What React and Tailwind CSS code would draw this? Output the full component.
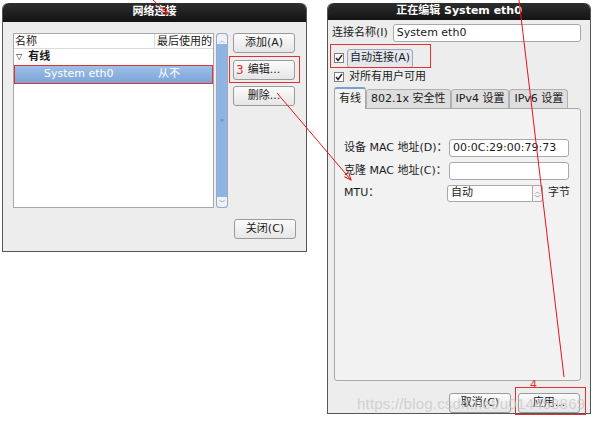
const font = { fontFamily: '"DejaVu Sans", "Noto Sans CJK SC", sans-serif' };

const Btn = ({ children, className = '' }) => (
  <div className={`h-[20px] w-[62px] flex items-center justify-center rounded-[3px] border border-[#9a9a9a] bg-gradient-to-b from-[#fbfbfb] to-[#e6e6e6] text-[11px] text-[#1a1a1a] ${className}`}>
    {children}
  </div>
);

const TitleBar = ({ children }) => (
  <div className="h-[19px] rounded-t-[6px] bg-gradient-to-b from-[#2e2e2e] to-[#141414] flex items-center justify-center text-[11px] font-bold text-white">
    {children}
  </div>
);

const Check = () => (
  <div className="w-[10px] h-[10px] border border-[#808080] bg-white flex items-center justify-center">
    <svg width="8" height="8" viewBox="0 0 8 8"><path d="M1 4 L3 6.5 L7 1" stroke="#222" strokeWidth="1.4" fill="none" /></svg>
  </div>
);

const Field = ({ value, w = 'w-[120px]' }) => (
  <div className={`h-[18px] ${w} rounded-[3px] border border-[#a8a8a8] bg-white px-[3px] text-[11px] text-[#1a1a1a] flex items-center`}>{value}</div>
);

export default function App() {
  return (
    <div className="relative w-[595px] h-[425px] bg-white overflow-hidden" style={font}>
      <div className="flex items-start pt-[3px] pl-[2px]">
        {/* left dialog */}
        <div className="w-[305px] h-[249px] flex flex-col rounded-t-[6px] border-x border-b border-[#555] bg-[#ededed]">
          <TitleBar>网络连接</TitleBar>
          <div className="flex flex-col pt-[11px] pl-[10px]">
            <div className="flex h-[175px]">
              <div className="w-[201px] border border-[#a8a8a8] bg-white flex flex-col text-[11px] text-[#1a1a1a]">
                <div className="h-[15px] flex border-b border-[#dcdcdc]">
                  <div className="w-[141px] pl-[1px] border-r border-[#dcdcdc]">名称</div>
                  <div className="pl-[2px] whitespace-nowrap overflow-hidden">最后使用的</div>
                </div>
                <div className="h-[16px] flex items-center gap-[6px] pl-[2px] font-bold">
                  <span className="text-[8px] font-normal">▽</span>有线
                </div>
                <div className="h-[19px] flex items-center border border-[#e0332f] bg-gradient-to-b from-[#9ebfe8] to-[#7ba4d8] text-white">
                  <span className="pl-[29px] w-[143px]">System eth0</span>
                  <span>从不</span>
                </div>
              </div>
              <div className="ml-[2px] w-[12px] flex flex-col rounded-[3px] border border-[#9aaac0] bg-[#8fb3e2]">
                <div className="h-[10px] bg-[#eef2f8] rounded-t-[3px] text-[6px] text-[#888] flex items-center justify-center">︿</div>
                <div className="flex-1 flex items-center justify-center text-[5px] text-[#6080b0]">≡</div>
                <div className="h-[10px] bg-[#eef2f8] rounded-b-[3px] text-[6px] text-[#888] flex items-center justify-center">﹀</div>
              </div>
              <div className="ml-[5px] flex flex-col gap-[7px]">
                <Btn>添加(A)</Btn>
                <Btn>编辑...</Btn>
                <Btn className="-mt-[1px]">删除...</Btn>
              </div>
            </div>
            <div className="flex justify-end pr-[10px] mt-[11px]">
              <Btn>关闭(C)</Btn>
            </div>
          </div>
        </div>

        {/* right dialog */}
        <div className="ml-[20px] w-[264px] h-[411px] flex flex-col rounded-t-[6px] border-x border-b border-[#555] bg-[#ededed] text-[11px] text-[#1a1a1a]">
          <TitleBar>正在编辑 System eth0</TitleBar>
          <div className="flex flex-col pl-[4px] pr-[9px] pt-[4px]">
            <div className="flex items-center gap-[5px]">
              <span>连接名称(I)</span>
              <Field value="System eth0" w="flex-1" />
            </div>
            <div className="flex items-center gap-[3px] mt-[7px] pl-[2px]">
              <Check />
              <span className="px-[2px] rounded-[3px] border border-[#9aa6b8] bg-[#e4e8ee]">自动连接(A)</span>
            </div>
            <div className="flex items-center gap-[5px] mt-[1px] pl-[2px]">
              <Check />
              <span>对所有用户可用</span>
            </div>
            <div className="flex mt-[2px] pl-[2px] items-end">
              <div className="h-[22px] px-[4px] flex items-center bg-[#f2f2f2] border border-[#a8a8a8] border-b-0 rounded-t-[3px] border-t-2 border-t-[#7aa0d0] relative z-10">有线</div>
              <div className="h-[20px] px-[4px] flex items-center bg-[#dedede] border border-[#b0b0b0] rounded-t-[3px]">802.1x 安全性</div>
              <div className="h-[20px] px-[4px] flex items-center bg-[#dedede] border border-[#b0b0b0] rounded-t-[3px]">IPv4 设置</div>
              <div className="h-[20px] px-[4px] flex items-center bg-[#dedede] border border-[#b0b0b0] rounded-t-[3px]">IPv6 设置</div>
            </div>
            <div className="ml-[2px] -mt-[1px] h-[273px] border border-[#a8a8a8] rounded-b-[3px] rounded-tr-[3px] bg-[#f2f2f2] pt-[30px] pl-[9px] pr-[11px] flex flex-col gap-[5px]">
              <div className="flex items-center justify-between">
                <span>设备 MAC 地址(D)：</span>
                <Field value="00:0C:29:00:79:73" />
              </div>
              <div className="flex items-center justify-between">
                <span>克隆 MAC 地址(C)：</span>
                <Field value="" />
              </div>
              <div className="flex items-center justify-between">
                <span>MTU：</span>
                <div className="flex items-center gap-[5px] -mr-[1px]">
                  <div className="flex h-[17px]">
                    <div className="w-[86px] border border-[#a8a8a8] rounded-l-[3px] bg-white px-[3px] flex items-center">自动</div>
                    <div className="w-[10px] border border-l-0 border-[#a8a8a8] rounded-r-[3px] bg-[#f4f4f4] flex flex-col text-[6px] text-[#777] leading-[7px] items-center justify-center">
                      <span>︿</span><span>﹀</span>
                    </div>
                  </div>
                  <span>字节</span>
                </div>
              </div>
            </div>
            <div className="flex justify-end gap-[7px] mt-[12px] pr-[1px]">
              <Btn className="h-[18px]">取消(C)</Btn>
              <Btn className="h-[18px]">应用...</Btn>
            </div>
          </div>
        </div>
      </div>

      {/* annotations */}
      <div className="absolute left-[229px] top-[56px] w-[71px] h-[27px] border border-[#e0332f]" />
      <div className="absolute left-[236px] top-[61px] text-[12px] text-[#e0332f]">3</div>
      <div className="absolute left-[330px] top-[44px] w-[101px] h-[24px] border border-[#e0332f]" />
      <div className="absolute left-[515px] top-[387px] w-[71px] h-[28px] border border-[#e0332f]" />
      <div className="absolute left-[530px] top-[377px] text-[11px] text-[#e0332f]">4</div>
      <div className="absolute left-[357px] top-[393px] text-[15px] text-[#c8c8c8]/80 whitespace-nowrap tracking-[0.2px]" style={{ fontFamily: '"Liberation Sans", sans-serif' }}>https://blog.csdn.net/u014458869</div>
      <svg className="absolute inset-0 pointer-events-none" width="595" height="425">
        <defs>
          <marker id="ah" markerWidth="8" markerHeight="8" refX="7" refY="4" orient="auto">
            <path d="M0 1 L7 4 L0 7" stroke="#e8141a" strokeWidth="1" fill="none" />
          </marker>
        </defs>
        <line x1="153" y1="0" x2="168" y2="14" stroke="#e8141a" strokeWidth="1" markerEnd="url(#ah)" />
        <line x1="277" y1="93" x2="351" y2="180" stroke="#e8141a" strokeWidth="1" markerEnd="url(#ah)" />
        <line x1="519" y1="0" x2="564" y2="377" stroke="#e8141a" strokeWidth="1" />
      </svg>
    </div>
  );
}
